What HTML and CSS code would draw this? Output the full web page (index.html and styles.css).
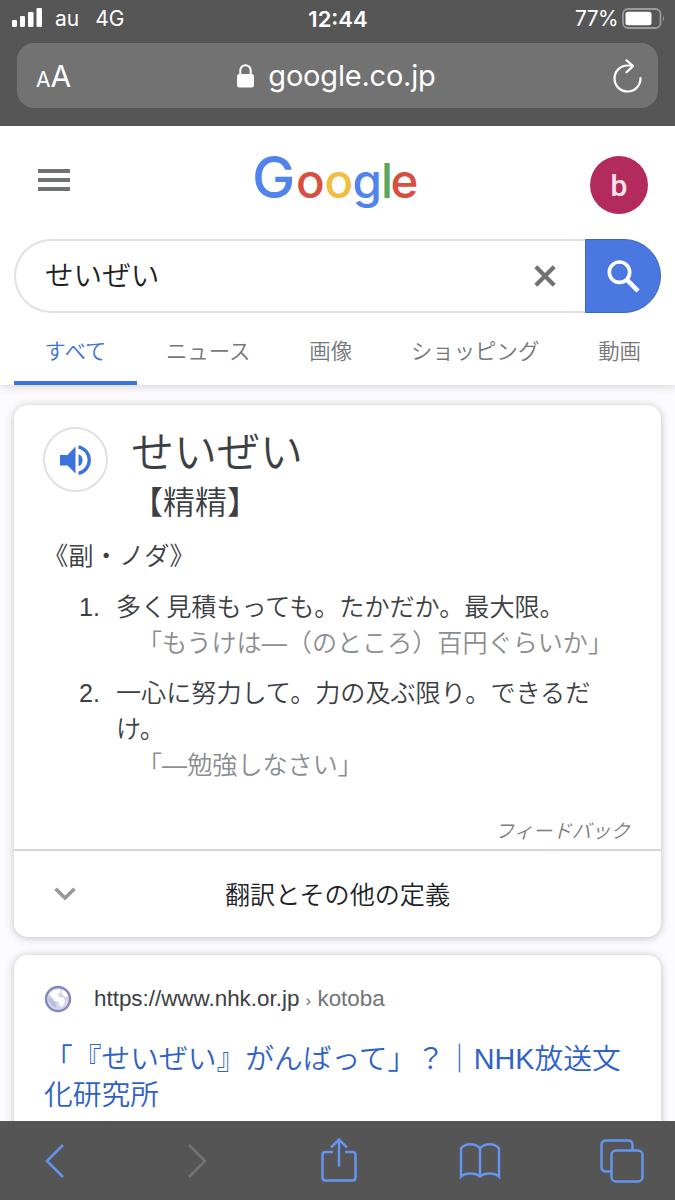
FILE: index.html
```html
<!doctype html>
<html lang="ja">

<head>
  <meta charset="utf-8">
  <meta name="viewport" content="width=device-width, initial-scale=1.0">
  <title>せいぜい - Google 検索</title>
  <link rel="stylesheet" href="styles.css">
</head>

<body>
  <!-- Browser top -->
  <div class="topbar">
    <div class="status">
      <div class="carrier">
        <svg width="30" height="19" viewBox="0 0 30 19" fill="#fff">
          <rect x="0" y="12" width="5" height="7" rx="1.3"/>
          <rect x="8" y="8" width="5" height="11" rx="1.3"/>
          <rect x="16" y="4" width="5.5" height="15" rx="1.3"/>
          <rect x="24.5" y="0" width="5.5" height="19" rx="1.3"/>
        </svg>
        <span class="au">au</span>
        <span>4G</span>
      </div>
      <div class="time">12:44</div>
      <div class="battery">
        <span>77%</span>
        <svg width="43" height="21" viewBox="0 0 43 21">
          <rect x="1" y="1" width="37.5" height="19" rx="5" fill="none" stroke="#9a9a9a" stroke-width="1.8"/>
          <rect x="3.5" y="3.7" width="26" height="13.6" rx="2.5" fill="#fff"/>
          <path d="M41 7.5q2 3 0 6z" fill="#9a9a9a"/>
        </svg>
      </div>
    </div>
    <div class="address">
      <div class="textsize"><span>A</span>A</div>
      <div class="domain">
        <svg width="17" height="24" viewBox="0 0 17 24">
          <rect x="0" y="10" width="17" height="13.5" rx="2.5" fill="#fff"/>
          <path d="M3.3 11V6.5a5.2 5.2 0 0 1 10.4 0V11" fill="none" stroke="#fff" stroke-width="2"/>
        </svg>
        <span>google.co.jp</span>
      </div>
      <svg class="reload" width="30" height="34" viewBox="0 0 30 34" fill="none" stroke="#fff" stroke-width="2.2" stroke-linecap="round" stroke-linejoin="round">
        <path d="M27.5 19a13 13 0 1 1-13-12.5h5"/>
        <path d="M13.5 1.3l6.500 5.8-6.500 6.200"/>
      </svg>
    </div>
  </div>

  <div class="page">
    <div class="header">
      <div class="brand">
        <div class="menu"><i></i><i></i><i></i></div>
        <svg class="logo" width="166" height="58" viewBox="0 0 166 58">
          <text y="42" x="-1 43 71.5 99.5 128 137.5"><tspan class="blue cap">G</tspan><tspan class="red">o</tspan><tspan class="yellow">o</tspan><tspan class="blue">g</tspan><tspan class="green">l</tspan><tspan class="red">e</tspan></text>
        </svg>
        <div class="avatar">b</div>
      </div>

      <div class="search">
        <div class="query">せいぜい</div>
        <svg class="clear" width="22" height="22" viewBox="0 0 22 22" stroke="#6f7173" stroke-width="4.2">
          <path d="M1.8 1.8l18.4 18.4M20.2 1.8L1.8 20.2"/>
        </svg>
        <div class="go">
          <svg width="33" height="33" viewBox="0 0 33 33" fill="none" stroke="#fff">
            <circle cx="12.5" cy="12.2" r="10.2" stroke-width="3.6"/>
            <path d="M20 19.8l11 11.2" stroke-width="4.6"/>
          </svg>
        </div>
      </div>

      <div class="tabs">
        <div class="tab active">すべて</div>
        <div class="tab">ニュース</div>
        <div class="tab">画像</div>
        <div class="tab">ショッピング</div>
        <div class="tab">動画</div>
      </div>
    </div>

    <div class="card">
      <div class="definition">
        <div class="word">
          <div class="speaker">
            <svg width="32" height="30" viewBox="0 0 32 30" fill="#3b73dd">
              <path d="M0 10v10.5h7.5l8 8v-27l-8 8.500z"/>
              <path d="M18.5 9.2c5.4 1.4 5.4 10.6 0 12z"/>
              <path d="M18.5 1.8a13.6 13.6 0 0 1 0 26.6" fill="none" stroke="#3b73dd" stroke-width="3.3"/>
            </svg>
          </div>
          <div>
            <div class="kana">せいぜい</div>
            <div class="kanji">【精精】</div>
          </div>
        </div>
        <div class="pos">《副・ノダ》</div>
        <ol>
          <li>
            <span class="num">1.</span>
            <div>
              <div>多く見積もっても。たかだか。最大限。</div>
              <div class="sample">「もうけは—（のところ）百円ぐらいか」</div>
            </div>
          </li>
          <li>
            <span class="num">2.</span>
            <div>
              <div>一心に努力して。力の及ぶ限り。できるだけ。</div>
              <div class="sample">「—勉強しなさい」</div>
            </div>
          </li>
        </ol>
        <div class="feedback">フィードバック</div>
      </div>
      <div class="more">
        <svg width="22" height="14" viewBox="0 0 22 14" fill="none" stroke="#98999b" stroke-width="3.6">
          <path d="M1.5 1.8l9.5 9.3 9.5-9.3"/>
        </svg>
        <span>翻訳とその他の定義</span>
      </div>
    </div>

    <div class="card result">
      <div class="source">
        <svg width="28" height="28" viewBox="0 0 28 28">
          <circle cx="14" cy="14" r="12" fill="#d3d7ea" stroke="#8587ba" stroke-width="2.4"/>
          <path d="M5 9l5-4 6-1 1 3-3 2 1 3 5 1 1 4-3 5-3-2v-3l-4-1-3-4z" fill="#fff"/>
          <path d="M18 5l4 2 2 4-3 1-3-3z" fill="#fff"/>
          <path d="M4.5 12l3 2 4 4 1 5-4-2-4-5z" fill="#b9bedc"/>
        </svg>
        <div class="url">https://www.nhk.or.jp <span><small>›</small> kotoba</span></div>
      </div>
      <a class="title">「『せいぜい』がんばって」？｜NHK放送文化研究所</a>
    </div>
  </div>

  <!-- Browser bottom -->
  <div class="toolbar">
    <svg height="36" viewBox="0 0 20 36">
      <path d="M18 2L2 18l16 16"/>
    </svg>
    <svg class="disabled" height="36" viewBox="0 0 20 36">
      <path d="M2 2l16 16L2 34"/>
    </svg>
    <svg height="46" viewBox="0 0 36 46">
      <path d="M12 14H4.5q-3 0-3 3v22.500q0 3 3 3h27q3 0 3-3V17q0-3-3-3H24"/>
      <path d="M18 28.5V1.8M10 9.5l8-8 8 8"/>
    </svg>
    <svg height="38" viewBox="0 0 42 38">
      <path d="M21 6.5C17 .8 6 .8 2 6.5v28C6 30.5 17 30.5 21 34.5c4-4 15-4 19 0v-28C36 .8 25 .8 21 6.5zV34.5"/>
    </svg>
    <svg height="44" viewBox="0 0 44 44">
      <path d="M11 32.5H6q-4.500 0-4.500-4.500V6q0-4.500 4.500-4.500h22q4.500 0 4.500 4.500v5"/>
      <rect x="11.5" y="11.5" width="31" height="31" rx="4.5"/>
    </svg>
  </div>
</body>
</html>
```
FILE: styles.css
```css
* {
  box-sizing: border-box;
}

body {
  margin: 0;
  height: 1200px;
  display: flex;
  flex-direction: column;
  overflow: hidden;
  background-color: #fcfcfe;
  color: #3c4043;
  font-family: "Liberation Sans", "Noto Sans CJK JP", sans-serif;
  font-weight: 350;
  font-size: 25.1px;
  text-spacing-trim: space-all;
}

svg {
  display: block;
  flex: none;
}

/* Browser top */
.topbar {
  height: 126px;
  flex: none;
  background-color: #565656;
  color: #fff;
  font-family: Inter, sans-serif;
  font-weight: 400;
}

.status {
  height: 43px;
  padding: 0 11px 6px 12px;
  display: grid;
  grid-template-columns: 1fr auto 1fr;
  align-items: center;
  font-size: 21px;
}

.carrier {
  display: flex;
  align-items: center;
}

.carrier svg {
  margin-top: -2px;
}

.au {
  margin: 0 16px 0 13px;
}

.time {
  font-weight: 600;
  font-size: 22px;
}

.battery {
  display: flex;
  justify-content: flex-end;
  align-items: center;
  gap: 4px;
  margin-right: -1px;
  letter-spacing: -0.6px;
}

.address {
  height: 65px;
  margin: 0 17px;
  padding: 0 15px 0 19px;
  display: grid;
  grid-template-columns: 1fr auto 1fr;
  align-items: center;
  border-radius: 17px;
  background-color: #727272;
}

.textsize {
  font-size: 30px;
}

.textsize span {
  font-size: 21px;
}

.domain {
  display: flex;
  align-items: center;
  gap: 14px;
  margin-right: 6px;
  font-size: 29px;
  letter-spacing: -0.2px;
}

.reload {
  justify-self: end;
}

/* Google header */
.page {
  flex: 1;
  min-height: 0;
  overflow: hidden;
}

.header {
  height: 259px;
  padding: 0 14px;
  background-color: #fff;
  box-shadow: 0 2px 8px rgba(60, 64, 100, 0.2);
}

.brand {
  height: 113px;
  display: flex;
  align-items: center;
  justify-content: space-between;
  padding: 4px 13px 0 24px;
}

.menu {
  width: 32px;
  display: flex;
  flex-direction: column;
  gap: 5px;
  margin-top: -9px;
}

.menu i {
  height: 4px;
  background-color: #6f7173;
}

.logo {
  margin-left: 12px;
  overflow: visible;
  font-family: Inter, sans-serif;
  font-weight: 500;
  font-size: 47.5px;
}

.logo .cap { font-size: 58px; }
.blue { fill: #5083ed; }
.red { fill: #d84e3f; }
.yellow { fill: #f2bd41; }
.green { fill: #58a75b; }

.avatar {
  width: 58px;
  height: 58px;
  border-radius: 50%;
  background-color: #b32b5c;
  color: #fbe3ec;
  font-family: Roboto, sans-serif;
  font-weight: 500;
  font-size: 30px;
  line-height: 59px;
  text-align: center;
}

.search {
  height: 74px;
  display: flex;
  align-items: center;
  border: 2px solid #dfe1e5;
  border-right: 0;
  border-radius: 37px;
}

.query {
  flex: 1;
  padding: 0 0 6px 29px;
  font-size: 28.6px;
  color: #202124;
}

.clear {
  margin-right: 29px;
}

.go {
  width: 76px;
  height: 74px;
  margin: -2px 0;
  display: flex;
  align-items: center;
  justify-content: center;
  border: 1px solid #3d66c4;
  border-radius: 0 37px 37px 0;
  background-color: #4a77e0;
}

.tabs {
  height: 72px;
  display: flex;
  justify-content: space-between;
  padding-right: 20px;
  font-size: 21.4px;
  line-height: 79px;
  color: #757779;
}

.tab.active {
  width: 123px;
  margin-right: -30px;
  text-align: center;
  color: #3c73dc;
  border-bottom: 4px solid #3c73dc;
}

/* Cards */
.card {
  margin: 20px 14px 18px;
  border-radius: 14px;
  background-color: #fff;
  box-shadow: 0 1px 8px rgba(32, 33, 46, 0.28);
}

.definition {
  height: 446px;
  padding: 22px 29px 0;
  border-bottom: 2px solid #d4d5d7;
}

.word {
  height: 101px;
  display: flex;
  gap: 23px;
}

.speaker {
  width: 65px;
  height: 65px;
  display: flex;
  align-items: center;
  justify-content: center;
  border: 2px solid #dfe1e5;
  border-radius: 50%;
}

.kana {
  font-size: 43px;
  line-height: 52px;
}

.kanji {
  font-size: 32px;
  line-height: 49px;
}

.pos {
  height: 57px;
  font-size: 25.3px;
  line-height: 56px;
}

ol {
  margin: 5px 0 0;
  padding: 0;
  list-style: none;
  line-height: 35.7px;
}

li {
  display: flex;
  margin-bottom: 15px;
}

.num {
  width: 57px;
  margin-right: 16px;
  flex: none;
  text-align: right;
}

.sample {
  margin-left: 21px;
  white-space: nowrap;
  color: #8b8d90;
}

.feedback {
  margin: 35px 2px 0 0;
  text-align: right;
  font-size: 19.4px;
  line-height: 24px;
  font-style: italic;
  color: #7b7d80;
}

.more {
  height: 86px;
  display: grid;
  grid-template-columns: 1fr auto 1fr;
  align-items: center;
  padding: 0 40px;
  color: #202124;
}

.more span {
  padding-bottom: 3px;
}

.result {
  height: 300px;
  margin-top: 18px;
  margin-bottom: 0;
  padding: 30px 29px 0 30px;
}

.source {
  height: 28px;
  display: flex;
  align-items: center;
  gap: 22px;
}

.url {
  font-size: 22.4px;
}

.url span {
  color: #70757a;
}

.url small {
  font-size: 17px;
}

.title {
  display: block;
  margin-top: 28px;
  font-size: 28.75px;
  line-height: 36px;
  color: #2f62c9;
}

/* Browser bottom */
.toolbar {
  height: 79px;
  flex: none;
  display: flex;
  align-items: center;
  justify-content: space-between;
  padding: 0 31px 0 33px;
  background-color: #555;
}

.toolbar svg {
  width: 44px;
  fill: none;
  stroke: #6494ee;
  stroke-width: 2.5;
}

.toolbar .disabled {
  stroke: #747474;
}
```
